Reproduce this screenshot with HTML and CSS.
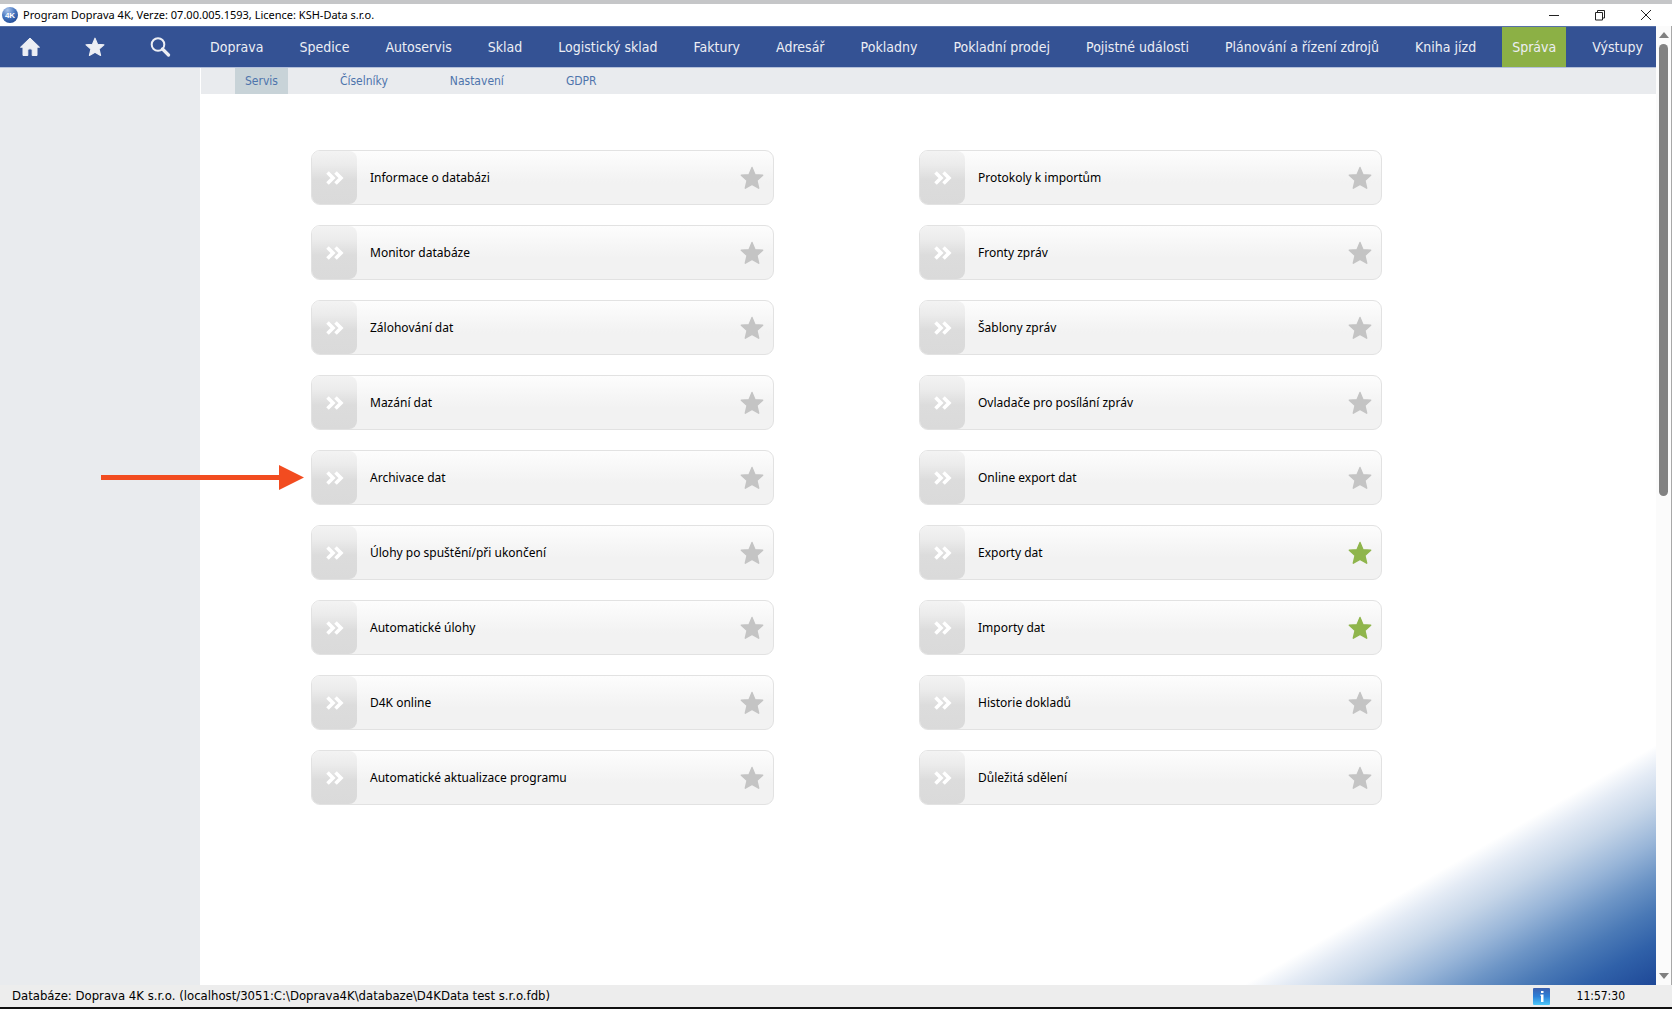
FILE: index.html
```html
<!DOCTYPE html>
<html lang="cs">
<head>
<meta charset="utf-8">
<meta name="viewport" content="width=device-width, initial-scale=1">
<title>Program Doprava 4K</title>
<link rel="stylesheet" href="styles.css">
</head>
<body>
<svg class="defs" aria-hidden="true">
  <symbol id="star" viewBox="0 0 24 24"><path d="M12 1.4 15 8.7 22.700 9.300 16.900 14.500 18.700 22.200 12 18.300 5.300 22.200 7.100 14.500 1.300 9.300 9 8.700Z" fill="currentColor" stroke="currentColor" stroke-width="1.400" stroke-linejoin="round"/></symbol>
  <symbol id="chevrons" viewBox="0 0 18 14"><path d="M1.500 1.500 7 7 1.500 12.500M9.500 1.500 15 7 9.500 12.500" fill="none" stroke="currentColor" stroke-width="3.600"/></symbol>
</svg>

<header class="titlebar">
  <svg class="logo" viewBox="0 0 16 16" aria-hidden="true">
    <defs><radialGradient id="ball" cx=".35" cy=".2" r=".9"><stop offset="0" stop-color="#a9c3ea"/><stop offset=".5" stop-color="#4a78c0"/><stop offset="1" stop-color="#1c4590"/></radialGradient></defs>
    <circle cx="8" cy="8" r="8" fill="url(#ball)"/>
    <text x="8" y="11" text-anchor="middle" class="logo-text">4K</text>
  </svg>
  <h1 class="title">Program Doprava 4K, Verze: 07.00.005.1593, Licence: KSH-Data s.r.o.</h1>
  <div class="window-controls">
    <button type="button" aria-label="Minimalizovat"><svg viewBox="0 0 12 12"><path d="M1 6.500H11"/></svg></button>
    <button type="button" aria-label="Obnovit"><svg viewBox="0 0 12 12"><path d="M1.500 3.500H8.500V11H1.500ZM3.500 3.500V1.500H10.500V9H8.500"/></svg></button>
    <button type="button" aria-label="Zavřít"><svg viewBox="0 0 12 12"><path d="M1 1 11 11M11 1 1 11"/></svg></button>
  </div>
</header>

<div class="workspace">
  <div class="app">
    <div class="topnav">
      <div class="tools">
        <button type="button" aria-label="Domů"><svg viewBox="0 0 22 20"><path d="M11 1 20.500 10.200H18V18.500H13.200V13Q13.200 11.800 11 11.800T8.800 13V18.500H4V10.200H1.500Z" fill="currentColor" stroke="currentColor" stroke-linejoin="round"/></svg></button>
        <button type="button" aria-label="Oblíbené"><svg viewBox="0 0 22 20"><use href="#star"/></svg></button>
        <button type="button" aria-label="Hledat"><svg viewBox="0 0 22 20"><circle cx="9" cy="7.500" r="6.300" fill="none" stroke="currentColor" stroke-width="2"/><path d="M13.500 12 19.500 18" stroke="currentColor" stroke-width="3.200" stroke-linecap="round"/></svg></button>
      </div>
      <nav class="menu">
        <a href="#">Doprava</a><a href="#">Spedice</a><a href="#">Autoservis</a><a href="#">Sklad</a><a href="#">Logistický sklad</a><a href="#">Faktury</a><a href="#">Adresář</a><a href="#">Pokladny</a><a href="#">Pokladní prodej</a><a href="#">Pojistné události</a><a href="#">Plánování a řízení zdrojů</a><a href="#">Kniha jízd</a><a href="#" class="active">Správa</a><a href="#">Výstupy</a>
      </nav>
    </div>
    <div class="body">
      <aside class="sidebar"></aside>
      <div class="content">
        <nav class="submenu"><a href="#" class="active">Servis</a><a href="#">Číselníky</a><a href="#">Nastavení</a><a href="#">GDPR</a></nav>
        <main class="tiles">
          <ul>
            <li class="tile"><button type="button" class="open"><span class="badge"><svg><use href="#chevrons"/></svg></span>Informace o databázi</button><button type="button" class="fav" aria-label="Oblíbené"><svg><use href="#star"/></svg></button></li>
            <li class="tile"><button type="button" class="open"><span class="badge"><svg><use href="#chevrons"/></svg></span>Monitor databáze</button><button type="button" class="fav" aria-label="Oblíbené"><svg><use href="#star"/></svg></button></li>
            <li class="tile"><button type="button" class="open"><span class="badge"><svg><use href="#chevrons"/></svg></span>Zálohování dat</button><button type="button" class="fav" aria-label="Oblíbené"><svg><use href="#star"/></svg></button></li>
            <li class="tile"><button type="button" class="open"><span class="badge"><svg><use href="#chevrons"/></svg></span>Mazání dat</button><button type="button" class="fav" aria-label="Oblíbené"><svg><use href="#star"/></svg></button></li>
            <li class="tile"><svg class="pointer" viewBox="0 0 203 25" aria-hidden="true"><path d="M0 10H178V0L203 12.500 178 25V15H0Z"/></svg><button type="button" class="open"><span class="badge"><svg><use href="#chevrons"/></svg></span>Archivace dat</button><button type="button" class="fav" aria-label="Oblíbené"><svg><use href="#star"/></svg></button></li>
            <li class="tile"><button type="button" class="open"><span class="badge"><svg><use href="#chevrons"/></svg></span>Úlohy po spuštění/při ukončení</button><button type="button" class="fav" aria-label="Oblíbené"><svg><use href="#star"/></svg></button></li>
            <li class="tile"><button type="button" class="open"><span class="badge"><svg><use href="#chevrons"/></svg></span>Automatické úlohy</button><button type="button" class="fav" aria-label="Oblíbené"><svg><use href="#star"/></svg></button></li>
            <li class="tile"><button type="button" class="open"><span class="badge"><svg><use href="#chevrons"/></svg></span>D4K online</button><button type="button" class="fav" aria-label="Oblíbené"><svg><use href="#star"/></svg></button></li>
            <li class="tile"><button type="button" class="open"><span class="badge"><svg><use href="#chevrons"/></svg></span>Automatické aktualizace programu</button><button type="button" class="fav" aria-label="Oblíbené"><svg><use href="#star"/></svg></button></li>
          </ul>
          <ul>
            <li class="tile"><button type="button" class="open"><span class="badge"><svg><use href="#chevrons"/></svg></span>Protokoly k importům</button><button type="button" class="fav" aria-label="Oblíbené"><svg><use href="#star"/></svg></button></li>
            <li class="tile"><button type="button" class="open"><span class="badge"><svg><use href="#chevrons"/></svg></span>Fronty zpráv</button><button type="button" class="fav" aria-label="Oblíbené"><svg><use href="#star"/></svg></button></li>
            <li class="tile"><button type="button" class="open"><span class="badge"><svg><use href="#chevrons"/></svg></span>Šablony zpráv</button><button type="button" class="fav" aria-label="Oblíbené"><svg><use href="#star"/></svg></button></li>
            <li class="tile"><button type="button" class="open"><span class="badge"><svg><use href="#chevrons"/></svg></span>Ovladače pro posílání zpráv</button><button type="button" class="fav" aria-label="Oblíbené"><svg><use href="#star"/></svg></button></li>
            <li class="tile"><button type="button" class="open"><span class="badge"><svg><use href="#chevrons"/></svg></span>Online export dat</button><button type="button" class="fav" aria-label="Oblíbené"><svg><use href="#star"/></svg></button></li>
            <li class="tile"><button type="button" class="open"><span class="badge"><svg><use href="#chevrons"/></svg></span>Exporty dat</button><button type="button" class="fav on" aria-label="Oblíbené" aria-pressed="true"><svg><use href="#star"/></svg></button></li>
            <li class="tile"><button type="button" class="open"><span class="badge"><svg><use href="#chevrons"/></svg></span>Importy dat</button><button type="button" class="fav on" aria-label="Oblíbené" aria-pressed="true"><svg><use href="#star"/></svg></button></li>
            <li class="tile"><button type="button" class="open"><span class="badge"><svg><use href="#chevrons"/></svg></span>Historie dokladů</button><button type="button" class="fav" aria-label="Oblíbené"><svg><use href="#star"/></svg></button></li>
            <li class="tile"><button type="button" class="open"><span class="badge"><svg><use href="#chevrons"/></svg></span>Důležitá sdělení</button><button type="button" class="fav" aria-label="Oblíbené"><svg><use href="#star"/></svg></button></li>
          </ul>
        </main>
      </div>
    </div>
  </div>
  <div class="scrollbar">
    <button type="button" aria-label="Nahoru"><svg viewBox="0 0 10 6"><path d="M0 6 5 0 10 6Z"/></svg></button>
    <div class="track"><div class="thumb"></div></div>
    <button type="button" aria-label="Dolů"><svg viewBox="0 0 10 6"><path d="M0 0H10L5 6Z"/></svg></button>
  </div>
</div>

<footer class="statusbar">
  <span class="database">Databáze: Doprava 4K s.r.o. (localhost/3051:C:\Doprava4K\databaze\D4KData test s.r.o.fdb)</span>
  <svg class="info" viewBox="0 0 17 17" role="img" aria-label="Informace">
    <defs><linearGradient id="infoFill" x2="0" y2="1"><stop offset="0" stop-color="#3c5fae"/><stop offset=".5" stop-color="#2c80d8"/><stop offset="1" stop-color="#4cc8fa"/></linearGradient></defs>
    <rect width="17" height="17" rx="1" fill="url(#infoFill)"/>
    <path d="M8 3H10.500V5H8ZM7.500 6.500H10.500V14H8V8H7.500Z" fill="#fff"/>
  </svg>
  <time class="clock">11:57:30</time>
</footer>
</body>
</html>
```
FILE: styles.css
```css
* { box-sizing: border-box; }

:root {
  --ui: "DejaVu Sans Condensed", "DejaVu Sans", sans-serif;
  --text: "Noto Sans", sans-serif;
  --blue: #345294;
  --green: #8cb045;
  --grey: #e9ebee;
}

body {
  margin: 0;
  min-height: 100vh;
  display: flex;
  flex-direction: column;
  background: #fff;
  border-top: 4px solid #c5c6c8;
  border-bottom: 2px solid #111;
  color: #000;
  font: 12px/16px var(--text);
}

.defs { position: absolute; width: 0; height: 0; }

button {
  margin: 0;
  padding: 0;
  border: 0;
  background: none;
  color: inherit;
  font: inherit;
  cursor: pointer;
}

a { color: inherit; text-decoration: none; }

svg { display: block; }

/* Window title bar */
.titlebar {
  display: flex;
  align-items: center;
  height: 22px;
  padding: 0 14px 0 2px;
}

.logo { width: 16px; height: 16px; }
.logo-text { fill: #fff; font: bold 8px "Liberation Sans", sans-serif; }

.title {
  flex: 1;
  margin: 0 0 0 5px;
  font: 11px/16px var(--text);
}

.window-controls { display: flex; gap: 22px; }
.window-controls button { width: 24px; height: 20px; display: grid; place-items: center; }
.window-controls svg { width: 12px; height: 12px; fill: none; stroke: #222; }

/* Application area beside the scrollbar */
.workspace { flex: 1; display: flex; border-right: 1px solid #a8a8a8; }
.app { flex: 1; display: flex; flex-direction: column; }

.topnav {
  display: flex;
  height: 42px;
  background: var(--blue);
  border-top: 1px solid #5670a8;
  border-bottom: 1px solid #b4c0da;
  color: #eceef4;
}

.tools {
  width: 200px;
  display: flex;
  align-items: center;
  gap: 43px;
  padding-left: 19px;
}

.tools svg { width: 22px; height: 20px; }

.menu {
  flex: 1;
  display: flex;
  justify-content: space-between;
  padding-right: 3px;
  font: 14px/40px var(--ui);
  white-space: nowrap;
}

.menu a { padding: 0 10px; }
.menu .active { background: var(--green); }

.body { flex: 1; display: flex; }
.sidebar { width: 200px; background: var(--grey); }

.content {
  flex: 1;
  display: flex;
  flex-direction: column;
  border-left: 1px solid #fff;
  background: linear-gradient(to bottom right, #fff 50%, #e4ebf5 55%, #c5d5e8 62%, #98b5d8 70%, #6d95c6 77%, #4a79b6 84%, #3061a9 91%, #1e4897 100%) right bottom / 412px 240px no-repeat;
}

.submenu {
  display: flex;
  gap: 42px;
  height: 26px;
  padding-left: 34px;
  background: var(--grey);
  color: #4e74ac;
  font: 12px/26px var(--ui);
}

.submenu a { padding: 0 10px; }
.submenu .active { background: #c8d3d8; }

/* Command tiles */
.tiles {
  display: grid;
  grid-template-columns: 1fr 1fr;
  gap: 145px;
  padding: 56px 274px 56px 110px;
}

.tiles ul {
  display: flex;
  flex-direction: column;
  gap: 20px;
  margin: 0;
  padding: 0;
  list-style: none;
}

.tile {
  position: relative;
  display: flex;
  height: 55px;
  border: 1px solid #e2e2e2;
  border-radius: 9px;
  background: linear-gradient(#fdfdfd, #f2f2f2 60%);
}

.open {
  flex: 1;
  display: flex;
  align-items: center;
  gap: 13px;
  text-align: left;
}

.badge {
  display: grid;
  place-items: center;
  align-self: stretch;
  width: 45px;
  border-radius: 8px;
  background: linear-gradient(#f3f3f3, #ececec 25%, #dcdcdc 55%, #dadada);
  color: #fff;
}

.badge svg { width: 18px; height: 14px; }

.fav { width: 42px; display: grid; place-items: center; color: #c4c4c4; }
.fav svg { width: 24px; height: 24px; }
.fav.on { color: #8fb54c; }

.pointer {
  position: absolute;
  right: calc(100% + 8px);
  top: 14px;
  width: 203px;
  height: 25px;
  fill: #f24c20;
}

/* Scrollbar */
.scrollbar {
  width: 15px;
  display: flex;
  flex-direction: column;
  align-items: center;
  background: #fbfbfb;
}

.scrollbar button { height: 18px; }
.scrollbar svg { width: 10px; height: 6px; fill: #808080; }
.track { flex: 1; width: 9px; }
.thumb { height: 49%; border-radius: 5px; background: #828282; }

/* Status bar */
.statusbar {
  display: flex;
  align-items: center;
  height: 22px;
  padding: 0 47px 0 12px;
  background: #ededed;
  font: 12px/16px var(--ui);
}

.database { flex: 1; font-size: 13px; }
.info { width: 17px; height: 17px; margin-right: 27px; }
```
